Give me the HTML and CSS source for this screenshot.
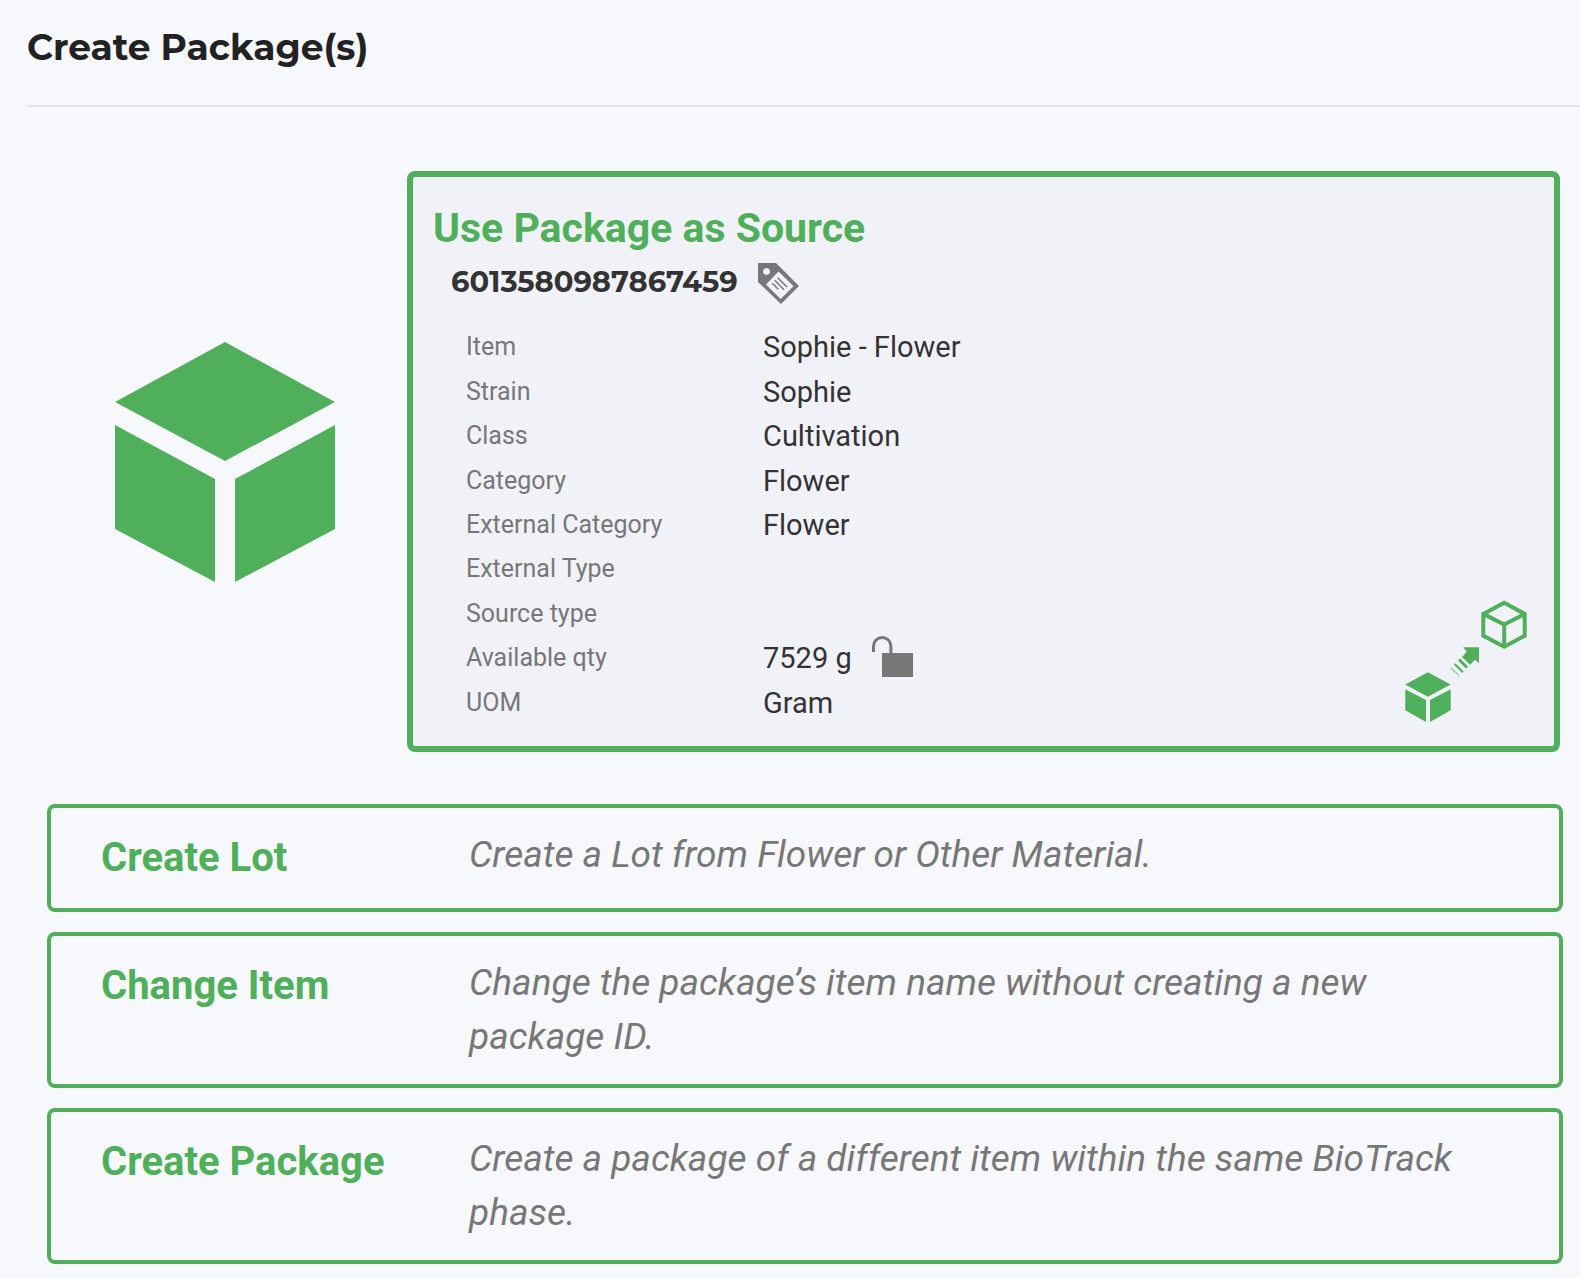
FILE: index.html
```html
<!DOCTYPE html>
<html lang="en">
<head>
<meta charset="utf-8">
<meta name="viewport" content="width=device-width, initial-scale=1">
<title>Create Package(s)</title>
<link rel="stylesheet" href="styles.css">
</head>
<body>
<header class="page-header">
  <h1 class="page-title">Create Package(s)</h1>
</header>
<main class="content">
  <section class="source">
    <svg class="source-cube" viewBox="0 0 220 240" aria-hidden="true">
      <path d="M110 0L220 60L110 119L0 60ZM0 83L100 137V240L0 187ZM220 83L120 137V240L220 187Z"/>
    </svg>
    <article class="source-card">
      <div class="source-body">
        <h2 class="source-title">Use Package as Source</h2>
        <div class="package-id">
          <span class="package-number">6013580987867459</span>
          <svg class="small-icon" viewBox="0 0 41 41" aria-hidden="true">
            <path fill-rule="evenodd" d="M0 0H18L41 23L23 41L0 19ZM8.500 5a3.500 3.500 0 1 0 .01 0ZM20.500 8.500L8 21.500L22.700 36L35.500 23.300Z"/>
            <path class="tag-lines" d="M14.300 20.300L20.300 26.300M16.700 17.300L26 26.700M19.700 14.700L29 24"/>
          </svg>
        </div>
        <dl class="details">
          <dt>Item</dt><dd>Sophie - Flower</dd>
          <dt>Strain</dt><dd>Sophie</dd>
          <dt>Class</dt><dd>Cultivation</dd>
          <dt>Category</dt><dd>Flower</dd>
          <dt>External Category</dt><dd>Flower</dd>
          <dt>External Type</dt><dd></dd>
          <dt>Source type</dt><dd></dd>
          <dt>Available qty</dt>
          <dd class="quantity">
            <span>7529 g</span>
            <svg class="small-icon" viewBox="0 0 41 41" aria-hidden="true">
              <path d="M10 17H41V41H10Z"/>
              <path class="shackle" d="M1.500 16V10.200a8.700 8.700 0 0 1 17.400 0V18"/>
            </svg>
          </dd>
          <dt>UOM</dt><dd>Gram</dd>
        </dl>
      </div>
      <svg class="transfer-icon" viewBox="0 0 122 122" aria-hidden="true">
        <path d="M22.800 72.200L45.700 84.400L22.800 96.700L.3 84.400ZM.3 89.300L21 100V122L.3 110.300ZM45.700 89.300L25 100V122L45.700 110.300Z"/>
        <path d="M58.300 47.300H74V63.300L70 59.700L65 64.700L57 57L61.700 51.700Z"/>
        <path class="bar-wide" d="M54 59.500L62 67.500"/>
        <path class="bar-mid" d="M49.700 64L58 72.300"/>
        <path class="bar-thin" d="M46 67.700L54 75.700"/>
        <path class="cube-outline" d="M99.200 2.700L119.700 13.900V35.800L99.200 46.700L78.300 35.800V13.900ZM78.300 13.900L99.200 24.600L119.700 13.900M99.200 24.600V46.700"/>
      </svg>
    </article>
  </section>
  <nav class="options" aria-label="Package actions">
    <button class="option" type="button">
      <span class="option-title">Create Lot</span>
      <span class="option-text">Create a Lot from Flower or Other Material.</span>
    </button>
    <button class="option" type="button">
      <span class="option-title">Change Item</span>
      <span class="option-text">Change the package’s item name without creating a new package ID.</span>
    </button>
    <button class="option" type="button">
      <span class="option-title">Create Package</span>
      <span class="option-text">Create a package of a different item within the same BioTrack phase.</span>
    </button>
  </nav>
</main>
</body>
</html>
```

FILE: styles.css
```css
:root {
  --green: #50af5a;
  --gray: #777777;
  --page: #f7f8fc;
}

* {
  box-sizing: border-box;
}

body {
  margin: 0;
  background: var(--page);
  color: #333333;
  font-family: Roboto, sans-serif;
}

h1, h2, dl, dd {
  margin: 0;
}

svg {
  display: block;
  flex: none;
  fill: var(--green);
}

.page-header {
  margin-left: 27px;
  padding: 25px 0 36px;
  border-bottom: 2px solid #e2e4e6;
}

.page-title {
  color: #222222;
  font: 700 36px/44px Montserrat, Inter, sans-serif;
}

.content {
  padding: 64px 17px 14px 47px;
}

.source {
  display: flex;
  align-items: center;
  margin-right: 3px;
}

.source-cube {
  width: 220px;
  height: 240px;
  margin: 0 72px 0 68px;
}

.source-card {
  display: flex;
  flex: 1;
  align-items: flex-end;
  padding: 26px 27px 21px 20px;
  border: 6px solid var(--green);
  border-radius: 8px;
  background: #f1f2f7;
}

.source-body {
  flex: 1;
}

.source-title {
  color: var(--green);
  font-size: 41px;
  line-height: 50px;
}

.package-id {
  display: flex;
  align-items: center;
  gap: 20px;
  margin: 10px 0 21px 18px;
  font: 700 29px/36px Montserrat, Inter, sans-serif;
}

.package-number {
  padding-bottom: 4px;
}

.small-icon {
  width: 41px;
  height: 41px;
  fill: var(--gray);
}

.tag-lines,
.shackle {
  fill: none;
  stroke: var(--gray);
}

.tag-lines {
  stroke-width: 1.5;
}

.shackle {
  stroke-width: 3;
}

.details {
  display: grid;
  grid-template-columns: 297px 1fr;
  grid-auto-rows: 1fr;
  align-items: center;
  min-height: 400px;
  margin-left: 33px;
  font-size: 29px;
  line-height: 44px;
}

.details dt {
  color: var(--gray);
  font-size: 25px;
}

.quantity {
  display: flex;
  align-items: flex-start;
  gap: 20px;
}

.transfer-icon {
  width: 122px;
  height: 122px;
  margin-bottom: 3px;
}

.cube-outline,
.bar-wide,
.bar-mid,
.bar-thin {
  fill: none;
  stroke: var(--green);
}

.cube-outline {
  stroke-width: 4;
}

.bar-wide {
  stroke-width: 3;
}

.bar-mid {
  stroke-width: 2;
}

.bar-thin {
  stroke-width: 1;
}

.options {
  display: grid;
  gap: 20px;
  margin-top: 52px;
}

.option {
  display: grid;
  grid-template-columns: 368px 1fr;
  align-items: start;
  padding: 20px 60px 20px 50px;
  border: 4px solid var(--green);
  border-radius: 8px;
  background: transparent;
  font-family: inherit;
  text-align: left;
  cursor: pointer;
}

.option-title {
  color: var(--green);
  font-size: 40px;
  font-weight: 700;
  line-height: 60px;
}

.option-text {
  color: var(--gray);
  font-size: 37px;
  font-style: italic;
  line-height: 54px;
}
```
